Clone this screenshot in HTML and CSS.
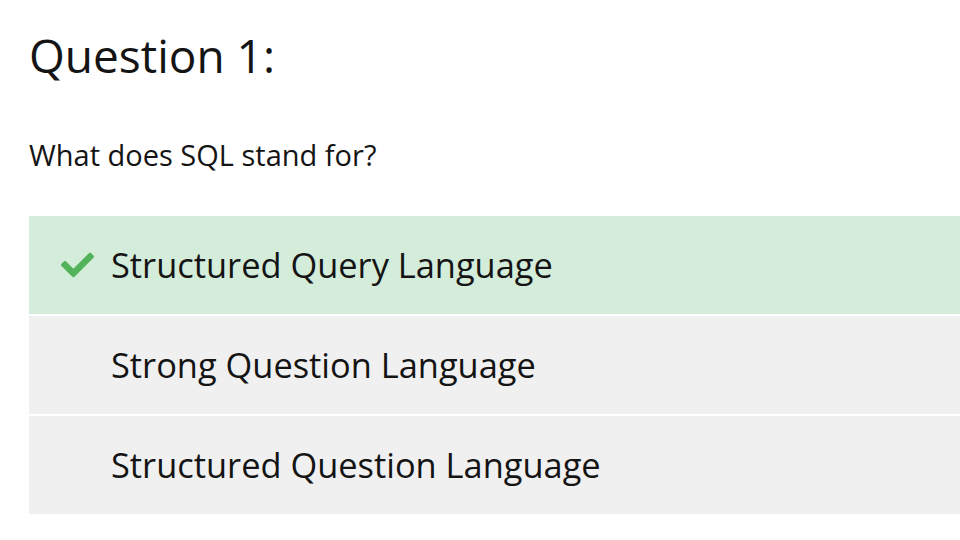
FILE: index.html
```html
<!DOCTYPE html>
<html>
<head>
<meta charset="utf-8">
<link rel="stylesheet" href="styles.css">
</head>
<body>
<div class="quiz">
  <h1 class="title">Question 1:</h1>
  <p class="prompt">What does SQL stand for?</p>
  <ul class="options">
    <li class="option correct">
      <span class="icon">
        <svg viewBox="0 64 512 384" width="33" height="26"><path fill="#52b35a" d="M173.898 439.404l-166.4-166.4c-9.997-9.997-9.997-26.206 0-36.204l36.203-36.204c9.997-9.998 26.207-9.998 36.204 0L192 312.69 432.095 72.596c9.997-9.997 26.207-9.997 36.204 0l36.203 36.204c9.997 9.997 9.997 26.206 0 36.204l-294.4 294.401c-9.998 9.997-26.207 9.997-36.204-.001z"/></svg>
      </span>
      <span class="label">Structured Query Language</span>
    </li>
    <li class="option">
      <span class="icon"></span>
      <span class="label">Strong Question Language</span>
    </li>
    <li class="option">
      <span class="icon"></span>
      <span class="label">Structured Question Language</span>
    </li>
  </ul>
</div>
</body>
</html>
```
FILE: styles.css
```css
html, body {
  margin: 0;
  padding: 0;
  background: #ffffff;
}
body {
  font-family: "Open Sans", "Noto Sans", sans-serif;
  color: #141414;
}
.quiz {
  padding: 24px 0 0 29px;
}
.title {
  margin: 0;
  font-size: 46px;
  font-weight: 400;
  line-height: 62px;
}
.prompt {
  margin: 50px 0 0 0;
  font-size: 29px;
  line-height: 38px;
}
.options {
  list-style: none;
  margin: 42px 0 0 0;
  padding: 0;
}
.option {
  display: flex;
  align-items: center;
  height: 98px;
  margin-bottom: 2px;
  padding-left: 32px;
  background: #f0f0f0;
  font-size: 34.4px;
}
.option.correct {
  background: #d4ecda;
}
.icon {
  width: 33px;
  height: 26px;
  margin-right: 17px;
  display: flex;
}
.label {
  line-height: 46px;
}
```
